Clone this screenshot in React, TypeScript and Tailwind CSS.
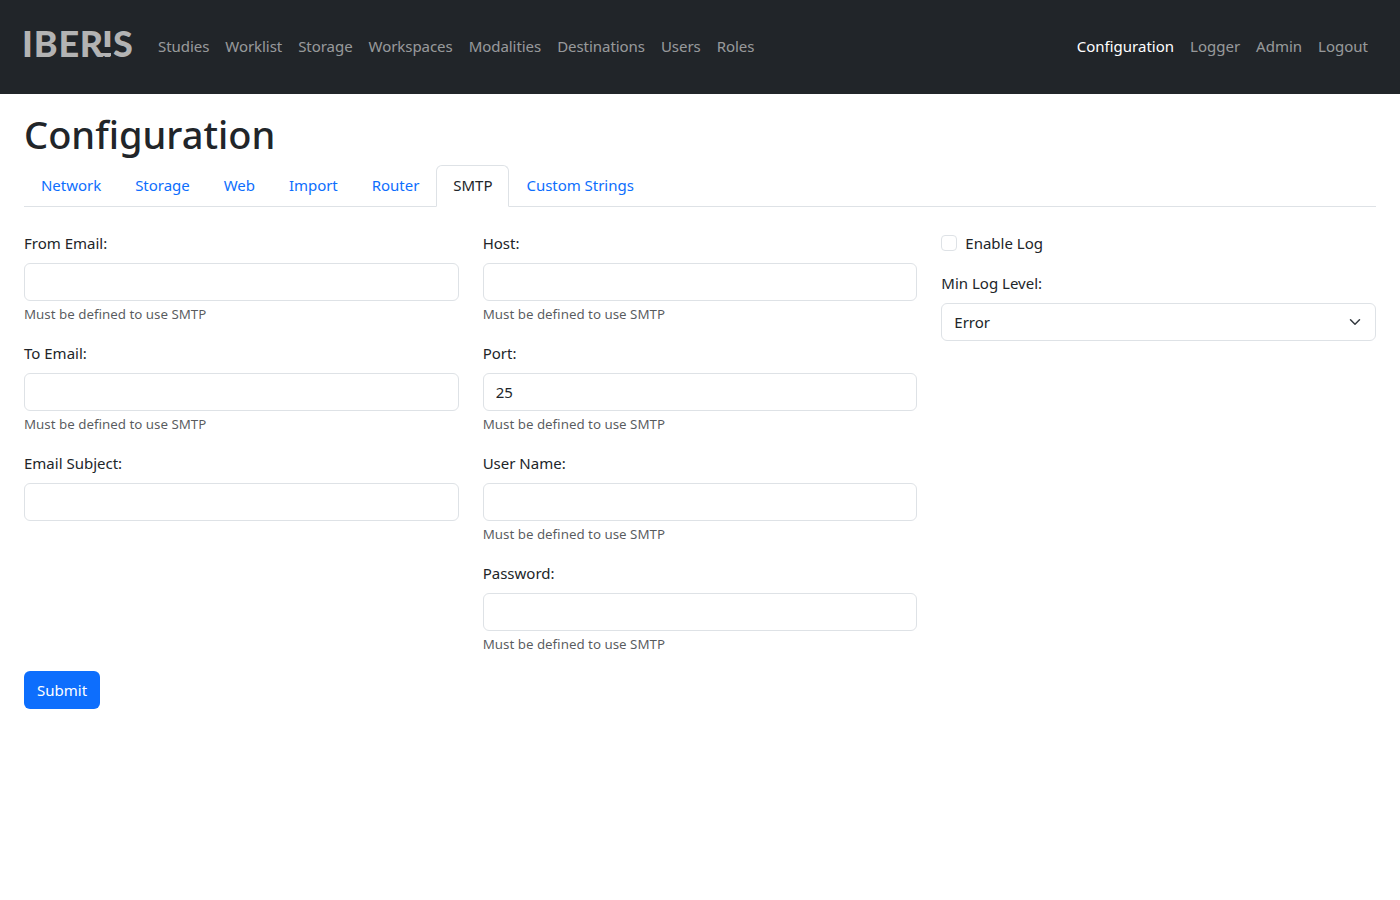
const font = { fontFamily: '"Noto Sans", sans-serif' };

const leftNav = ['Studies', 'Worklist', 'Storage', 'Workspaces', 'Modalities', 'Destinations', 'Users', 'Roles'];
const rightNav = ['Configuration', 'Logger', 'Admin', 'Logout'];
const tabs = ['Network', 'Storage', 'Web', 'Import', 'Router', 'SMTP', 'Custom Strings'];

const Field = ({ label, value, help = true }: { label: string; value?: string; help?: boolean }) => (
    <div>
        <label className="mb-2 block text-[15px] leading-6">{label}</label>
        <input
            readOnly
            value={value ?? ''}
            className="block h-[38px] w-full rounded-md border border-[#dee2e6] bg-white px-3 text-[15px] text-[#212529] outline-none"
        />
        {help && (
            <div className="mt-[3px] mb-4 text-[13.35px] leading-[21px] text-[#212529bf]">
                Must be defined to use SMTP
            </div>
        )}
    </div>
);

const Logo = () => (
    <div
        style={{ fontFamily: 'Lato, sans-serif' }}
        className="mr-4 mb-2 flex h-[26px] w-[110px] select-none text-[36px] leading-[26px] font-black text-[#b3b3b3]">
        <span className="ml-[-2px] tracking-[0.8px]">IBER</span>
        <span className="relative ml-[-2px]">
            I
            <span className="absolute top-[17px] left-0 h-[6px] w-full bg-[#212529]" />
            <span className="absolute top-[23px] right-[2px] h-[3px] w-[11px] bg-[#b3b3b3]" />
        </span>
        <span>S</span>
    </div>
);

export default function App() {
    return (
        <div style={font} className="min-h-[900px] bg-white text-[15px] text-[#212529]">
            <nav className="flex h-[94px] items-center bg-[#212529] px-6">
                <Logo />
                <ul className="flex tracking-[-0.05px]">
                    {leftNav.map((item) => (
                        <li key={item} className="px-2 pb-px text-[rgba(255,255,255,0.55)]">
                            {item}
                        </li>
                    ))}
                </ul>
                <ul className="ml-auto flex">
                    {rightNav.map((item) => (
                        <li
                            key={item}
                            className={item === 'Configuration' ? 'px-2 pb-px text-white' : 'px-2 pb-px text-[rgba(255,255,255,0.55)]'}>
                            {item}
                        </li>
                    ))}
                </ul>
            </nav>
            <main className="px-6">
                <h1 className="mt-4 mb-[7px] text-[38px] leading-[48px] font-medium">Configuration</h1>
                <div className="flex border-b border-[#dee2e6] tracking-[-0.03px]">
                    {tabs.map((tab) => (
                        <div
                            key={tab}
                            className={
                                tab === 'SMTP'
                                    ? '-mb-px rounded-t-md border border-[#dee2e6] border-b-white bg-white px-4 pt-[7px] pb-[9px] leading-6 text-[#212529]'
                                    : '-mb-px border border-transparent px-4 pt-[7px] pb-[9px] leading-6 text-[#0d6efd]'
                            }>
                            {tab}
                        </div>
                    ))}
                </div>
                <form className="mt-6">
                    <div className="grid grid-cols-3 gap-x-6">
                        <div>
                            <Field label="From Email:" />
                            <Field label="To Email:" />
                            <Field label="Email Subject:" help={false} />
                        </div>
                        <div>
                            <Field label="Host:" />
                            <Field label="Port:" value="25" />
                            <Field label="User Name:" />
                            <Field label="Password:" />
                        </div>
                        <div>
                            <div className="mb-4 flex h-6 items-center">
                                <span className="mr-2 h-4 w-4 rounded border border-[#dee2e6] bg-white" />
                                <span>Enable Log</span>
                            </div>
                            <label className="mb-2 block leading-6">Min Log Level:</label>
                            <div className="flex h-[38px] items-center justify-between rounded-md border border-[#dee2e6] bg-white pr-3 pl-3">
                                <span>Error</span>
                                <svg width="16" height="16" viewBox="0 0 16 16" fill="none">
                                    <path d="m2 5 6 6 6-6" stroke="#343a40" strokeWidth="2" strokeLinecap="round" strokeLinejoin="round" transform="translate(2 2) scale(.75)" />
                                </svg>
                            </div>
                        </div>
                    </div>
                    <button type="button" className="h-[38px] rounded-md bg-[#0d6efd] px-[13px] text-white">
                        Submit
                    </button>
                </form>
            </main>
        </div>
    );
}
